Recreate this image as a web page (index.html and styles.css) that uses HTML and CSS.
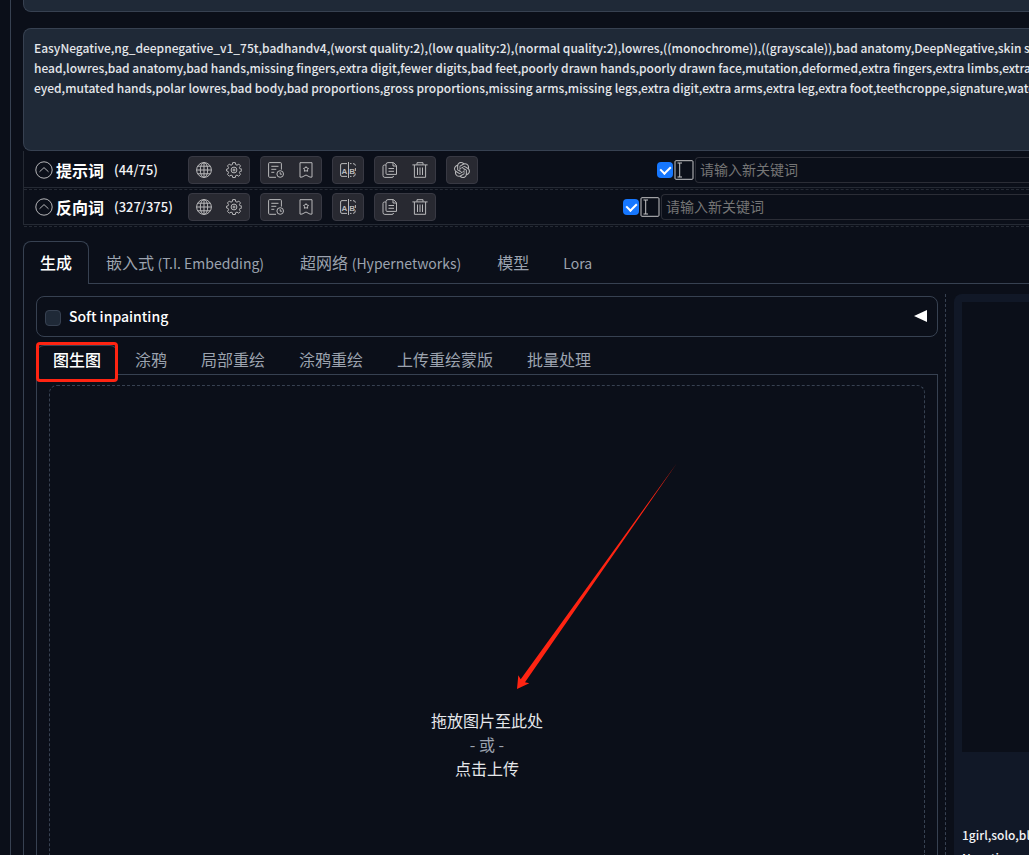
FILE: index.html
```
<!DOCTYPE html>
<html lang="zh-CN">
<head>
<meta charset="utf-8">
<meta name="viewport" content="width=device-width, initial-scale=1">
<title>图生图</title>
<link rel="stylesheet" href="styles.css">
</head>
<body>
<svg class="sprite" aria-hidden="true">
  <symbol id="i-up" viewBox="0 0 18 18"><circle cx="9" cy="9" r="8.2"/><path d="M4.5 10.8 9 6.6l4.500 4.200"/></symbol>
  <symbol id="i-globe" viewBox="0 0 16 16"><circle cx="8" cy="8" r="7.400"/><ellipse cx="8" cy="8" rx="3.700" ry="7.400"/><path d="M8 .6v14.800M.6 8h14.800M1.800 4.200h12.400M1.800 11.800h12.400"/></symbol>
  <symbol id="i-gear" viewBox="0 0 16 16"><path d="M6.700.6h2.600l.4 2 1.300.6 1.800-1.100 1.700 1.800-1.100 1.700.5 1.200 2 .4v1.700l-2 .5-.5 1.300 1.100 1.700-1.800 1.800-1.700-1.100-1.300.5-.4 1.900H6.700l-.4-1.900-1.300-.5-1.700 1.100-1.800-1.800 1.100-1.700-.5-1.300-1.600-.5V7.200l1.600-.4.5-1.200-1.100-1.700 1.800-1.800L5 3.200l1.300-.6z"/><circle cx="8" cy="8" r="2.900"/><circle cx="8" cy="8" r="1"/></symbol>
  <symbol id="i-history" viewBox="0 0 16 16"><path d="M8 15.300H1.600Q.6 15.300.6 14.300V1.600Q.6.600 1.600.6h10.800q1 0 1 1v6M3.300 4.300h7.200M3.300 7.300h5M3.300 10.300h3"/><circle cx="12.200" cy="12" r="3.300"/><path d="M12.200 10.200v2h1.700"/></symbol>
  <symbol id="i-mark" viewBox="0 0 16 16"><path d="M2 .7h12v14.400h-2L8 13l-4 2.100H2z"/><path d="m8 4.600.9 1.400 1.600.4-1 1.300.1 1.600L8 8.700l-1.600.6.1-1.600-1-1.300L7.100 6z"/></symbol>
  <symbol id="i-ab" viewBox="0 0 16 16"><path d="M7 1.600H2Q.6 1.600.6 3v10q0 1.400 1.400 1.400h5M8.500 0v16M10 1.600h1.500M13 1.600q2.400 0 2.400 2M15.400 6v3M15.400 11.500q0 2.900-2.400 2.900M10 14.400h1.500"/><text x="1.500" y="11.500">A</text><text x="9.200" y="11.500">B</text></symbol>
  <symbol id="i-copy" viewBox="0 0 16 16"><path d="M6 .6h5.500l3 3v8.800H5q-1 0-1-1V2.600Q4 .6 6 .6zM11 .8V4h3.300M6.500 6.500H12M6.500 9.300H12M3.900 3H2.500Q1 3 1 4.500v9q0 1.900 1.900 1.900H10q1.500 0 1.500-1.400"/></symbol>
  <symbol id="i-trash" viewBox="0 0 16 16"><path d="M.4 2.900h15.200M5 2.700V.7h6v2M2.400 3v12.300h11.200V3M5.500 5.500v7.500M8 5.500v7.500M10.500 5.500v7.500"/></symbol>
  <symbol id="i-ai" viewBox="0 0 24 24"><path class="solid" d="M22.2819 9.8211a5.9847 5.9847 0 0 0-.5157-4.9108 6.0462 6.0462 0 0 0-6.5098-2.9A6.0651 6.0651 0 0 0 4.9807 4.1818a5.9847 5.9847 0 0 0-3.9977 2.9 6.0462 6.0462 0 0 0 .7427 7.0966 5.98 5.98 0 0 0 .511 4.9107 6.051 6.051 0 0 0 6.5146 2.9001A5.9847 5.9847 0 0 0 13.2599 24a6.0557 6.0557 0 0 0 5.7718-4.2058 5.9894 5.9894 0 0 0 3.9977-2.9001 6.0557 6.0557 0 0 0-.7475-7.0729zm-9.022 12.6081a4.4755 4.4755 0 0 1-2.8764-1.0408l.1419-.0804 4.7783-2.7582a.7948.7948 0 0 0 .3927-.6813v-6.7369l2.02 1.1686a.071.071 0 0 1 .038.052v5.5826a4.504 4.504 0 0 1-4.4945 4.4944zm-9.6607-4.1254a4.4708 4.4708 0 0 1-.5346-3.0137l.142.0852 4.783 2.7582a.7712.7712 0 0 0 .7806 0l5.8428-3.3685v2.3324a.0804.0804 0 0 1-.0332.0615L9.74 19.9502a4.4992 4.4992 0 0 1-6.1408-1.6464zM2.3408 7.8956a4.485 4.485 0 0 1 2.3655-1.9728V11.6a.7664.7664 0 0 0 .3879.6765l5.8144 3.3543-2.0201 1.1685a.0757.0757 0 0 1-.071 0l-4.8303-2.7865A4.504 4.504 0 0 1 2.3408 7.872zm16.5963 3.8558L13.1038 8.364 15.1192 7.2a.0757.0757 0 0 1 .071 0l4.8303 2.7913a4.4944 4.4944 0 0 1-.6765 8.1042v-5.6772a.79.79 0 0 0-.407-.667zm2.0107-3.0231l-.142-.0852-4.7735-2.7818a.7759.7759 0 0 0-.7854 0L9.409 9.2297V6.8974a.0662.0662 0 0 1 .0284-.0615l4.8303-2.7866a4.4992 4.4992 0 0 1 6.6802 4.66zM8.3065 12.863l-2.02-1.1638a.0804.0804 0 0 1-.038-.0567V6.0742a4.4992 4.4992 0 0 1 7.3757-3.4537l-.142.0805L8.704 5.459a.7948.7948 0 0 0-.3927.6813zm1.0976-2.3654l2.602-1.4998 2.6069 1.4998v2.9994l-2.5974 1.4997-2.6067-1.4997Z"/></symbol>
  <symbol id="i-cursor" viewBox="0 0 20 20"><rect x="1" y=".7" width="18" height="18.600" rx="1"/><path d="M3.500 3h4.500M3.500 17h4.500M5.700 3v14"/></symbol>
</svg>

<main class="app">
  <textarea class="prompt prompt-top" aria-label="提示词文本" rows="1"></textarea>
  <textarea class="prompt prompt-negative" aria-label="反向词文本" wrap="off" spellcheck="false">EasyNegative,ng_deepnegative_v1_75t,badhandv4,(worst quality:2),(low quality:2),(normal quality:2),lowres,((monochrome)),((grayscale)),bad anatomy,DeepNegative,skin spots,
head,lowres,bad anatomy,bad hands,missing fingers,extra digit,fewer digits,bad feet,poorly drawn hands,poorly drawn face,mutation,deformed,extra fingers,extra limbs,extra arms,
eyed,mutated hands,polar lowres,bad body,bad proportions,gross proportions,missing arms,missing legs,extra digit,extra arms,extra leg,extra foot,teethcroppe,signature,watermark,</textarea>

  <section class="words">
    <div class="word-title">
      <button class="fold" aria-label="折叠"><svg><use href="#i-up"/></svg></button>
      <strong>提示词</strong><span class="count">(44/75)</span>
    </div>
    <div class="tools">
      <div class="group"><button aria-label="语言"><svg><use href="#i-globe"/></svg></button><button aria-label="设置"><svg><use href="#i-gear"/></svg></button></div>
      <div class="group"><button aria-label="历史"><svg><use href="#i-history"/></svg></button><button aria-label="收藏"><svg><use href="#i-mark"/></svg></button></div>
      <div class="group"><button aria-label="翻译"><svg><use href="#i-ab"/></svg></button></div>
      <div class="group"><button aria-label="复制"><svg><use href="#i-copy"/></svg></button><button aria-label="删除"><svg><use href="#i-trash"/></svg></button></div>
      <div class="group"><button aria-label="AI"><svg><use href="#i-ai"/></svg></button></div>
    </div>
    <div class="entry entry-positive">
      <input type="checkbox" class="tick" aria-label="启用提示词输入" checked>
      <svg class="cursor"><use href="#i-cursor"/></svg>
      <input type="text" class="keyword" aria-label="新提示词" placeholder="请输入新关键词">
    </div>
  </section>
  <section class="words">
    <div class="word-title">
      <button class="fold" aria-label="折叠"><svg><use href="#i-up"/></svg></button>
      <strong>反向词</strong><span class="count">(327/375)</span>
    </div>
    <div class="tools">
      <div class="group"><button aria-label="语言"><svg><use href="#i-globe"/></svg></button><button aria-label="设置"><svg><use href="#i-gear"/></svg></button></div>
      <div class="group"><button aria-label="历史"><svg><use href="#i-history"/></svg></button><button aria-label="收藏"><svg><use href="#i-mark"/></svg></button></div>
      <div class="group"><button aria-label="翻译"><svg><use href="#i-ab"/></svg></button></div>
      <div class="group"><button aria-label="复制"><svg><use href="#i-copy"/></svg></button><button aria-label="删除"><svg><use href="#i-trash"/></svg></button></div>
    </div>
    <div class="entry entry-negative">
      <input type="checkbox" class="tick" aria-label="启用反向词输入" checked>
      <svg class="cursor"><use href="#i-cursor"/></svg>
      <input type="text" class="keyword" aria-label="新反向词" placeholder="请输入新关键词">
    </div>
  </section>

  <nav class="tabs main-tabs">
    <button class="tab active">生成</button>
    <button class="tab">嵌入式 <span class="latin">(T.I. Embedding)</span></button>
    <button class="tab">超网络 <span class="latin">(Hypernetworks)</span></button>
    <button class="tab">模型</button>
    <button class="tab"><span class="latin">Lora</span></button>
  </nav>

  <div class="workspace">
    <div class="left">
      <div class="accordion">
        <input type="checkbox" class="soft" id="soft">
        <label for="soft" class="latin">Soft inpainting</label>
        <button class="expand" aria-label="展开"><svg viewBox="0 0 13 12"><path d="M0 6 13 0v12z"/></svg></button>
      </div>
      <nav class="tabs sub-tabs">
        <button class="tab active marked">图生图</button>
        <button class="tab">涂鸦</button>
        <button class="tab">局部重绘</button>
        <button class="tab">涂鸦重绘</button>
        <button class="tab">上传重绘蒙版</button>
        <button class="tab">批量处理</button>
      </nav>
      <div class="image-panel">
        <button class="dropzone">
          <svg class="arrow" viewBox="517 464 160 226" aria-hidden="true"><path d="M677 463 525 682.300 529.300 683.300 517 689 518.300 675.300 520.700 679.300z"/></svg>
          <span>拖放图片至此处</span>
          <span class="or">- 或 -</span>
          <span>点击上传</span>
        </button>
      </div>
    </div>
    <aside class="result">
      <div class="preview"></div>
      <p class="info">1girl,solo,black hair,<br>Negative prompt:</p>
    </aside>
  </div>
</main>
</body>
</html>
```
FILE: styles.css
```
* { box-sizing: border-box; }

html, body { height: 100%; }

body {
  margin: 0;
  overflow: hidden;
  background: #0b0f19;
  color: #f3f4f6;
  font: 16px/24px "Noto Sans CJK SC", sans-serif;
}

button, input, textarea { font: inherit; color: inherit; }

button {
  padding: 0;
  border: 0;
  background: none;
  cursor: pointer;
}

svg {
  display: block;
  fill: none;
  stroke: currentColor;
}

.sprite { display: none; }
.sprite text { fill: currentColor; stroke: none; font: bold 8px "Liberation Sans", sans-serif; }
.sprite .solid { fill: currentColor; stroke: none; }

.app {
  display: flex;
  flex-direction: column;
  min-height: 100%;
  margin-left: 10px;
  padding-left: 12px;
  border-left: 1px solid #374151;
}

.prompt {
  display: block;
  resize: none;
  border: 1px solid #374151;
  border-right: 0;
  border-radius: 8px 0 0 8px;
  background: #1f2937;
  color: #e5e7eb;
  font-size: 12px;
  font-weight: 500;
  line-height: 20px;
  padding: 9px 0 9px 10px;
  overflow: hidden;
  outline: 0;
}

.prompt-top {
  height: 12px;
  padding: 0;
  border-top: 0;
  border-radius: 0 0 0 8px;
}

.prompt-negative { height: 123px; margin-top: 16px; }

.words {
  position: relative;
  display: flex;
  align-items: center;
  height: 37px;
  padding: 2px 0 0 11px;
  border: 1px solid #252a34;
  border-width: 0 0 1px 1px;
}

.words::after {
  content: "";
  position: absolute;
  left: 0;
  right: 0;
  top: 38px;
  border-top: 1px dashed #252a34;
}

.word-title { display: flex; align-items: center; width: 153px; }
.word-title strong { margin-left: 3px; color: #fff; }

.fold, .fold svg { width: 18px; height: 18px; color: #b5b5b8; }

.count { margin-left: 10px; font-size: 13px; font-weight: 500; }

.tools { display: flex; gap: 10px; }

.group {
  display: flex;
  border: 1px solid #383943;
  border-radius: 4px;
  background: #282931;
}

.group button {
  display: grid;
  place-items: center;
  width: 30px;
  height: 26px;
  color: #b8b8ba;
}

.group svg { width: 16px; height: 16px; }

.entry { display: flex; flex: 1; align-items: center; }
.entry-positive { margin-left: 179px; }
.entry-negative { margin-left: 187px; }

.tick {
  appearance: none;
  width: 16px;
  height: 16px;
  margin: 0 1px 0 0;
  border-radius: 4px;
  background: #1677ff;
  display: grid;
  place-items: center;
}

.tick::after {
  content: "";
  width: 5px;
  height: 8px;
  margin-bottom: 2px;
  border: solid #fff;
  border-width: 0 2px 2px 0;
  transform: rotate(45deg);
}

.cursor { width: 20px; height: 20px; color: #c4c4c6; }

.keyword {
  flex: 1;
  min-width: 0;
  height: 26px;
  margin-left: 1px;
  padding: 0 0 2px 4px;
  border: 1px solid #2b2d36;
  border-right: 0;
  border-radius: 4px 0 0 4px;
  background: transparent;
  font-size: 14px;
  outline: 0;
}

.keyword::placeholder { color: #757575; opacity: 1; }

.latin { font-size: 14px; }

.tabs { display: flex; border-bottom: 1px solid #374151; }

.tab {
  padding: 0 16px;
  border: 1px solid transparent;
  border-bottom: 0;
  border-radius: 8px 8px 0 0;
  color: #9ca3af;
  white-space: nowrap;
}

.tab .latin { margin-right: 2px; }

.tab.active {
  margin-bottom: -1px;
  border-color: #374151;
  background: #0b0f19;
  color: #fff;
  font-weight: 500;
}

.main-tabs { margin-top: 16px; }
.main-tabs .tab { height: 42px; padding-bottom: 1px; }
.main-tabs .tab.active { height: 43px; padding-bottom: 3px; }

.workspace {
  display: grid;
  flex: 1;
  grid-template-columns: minmax(0, 1fr) 83px;
  border-left: 1px solid #374151;
  padding: 10px 0 0 12px;
}

.left {
  display: flex;
  flex-direction: column;
  padding: 2px 7px 0 0;
  border-right: 1px dashed #374151;
}

.accordion {
  display: flex;
  align-items: center;
  height: 41px;
  padding: 0 10px 2px 8px;
  border: 1px solid #374151;
  border-radius: 8px;
  color: #fff;
}

.accordion label { margin-left: 8px; font-weight: 500; }

.soft {
  appearance: none;
  width: 16px;
  height: 16px;
  margin: 5px 0 0;
  border: 1px solid #374151;
  border-radius: 4px;
  background: #1f2937;
}

.expand { margin-left: auto; }
.expand svg { width: 13px; height: 12px; fill: #fff; stroke: none; }

.sub-tabs { margin-top: 8px; }
.sub-tabs .tab { height: 29px; padding-bottom: 3px; }
.sub-tabs .tab.active { height: 30px; padding-bottom: 4px; }
.marked { position: relative; }

.marked::after {
  content: "";
  position: absolute;
  inset: -4px -1px -7px -1px;
  border: 3px solid #ff2412;
  border-radius: 4px;
}

.image-panel {
  display: flex;
  flex: 1;
  border: 1px solid #374151;
  border-width: 0 1px;
  padding: 10px 12px 0;
}

.dropzone {
  position: relative;
  display: flex;
  flex: 1;
  flex-direction: column;
  align-items: center;
  padding-top: 322px;
  border: 1px dashed #374151;
  border-bottom: 0;
  border-radius: 8px 8px 0 0;
  color: #e5e7eb;
}

.or { color: #9ca3af; }

.arrow {
  position: absolute;
  top: 78px;
  left: calc(50% + 30px);
  width: 160px;
  height: 226px;
  fill: #ff2412;
  stroke: none;
}

.result {
  margin-left: 8px;
  padding: 8px 0 0 8px;
  border-radius: 8px 0 0 0;
  background: #111827;
}

.preview { height: 450px; background: #0b0f19; }

.info {
  margin: 71px 0 0;
  height: 32px;
  overflow: hidden;
  font-size: 12px;
  font-weight: 500;
  line-height: 23px;
  white-space: nowrap;
}
```
